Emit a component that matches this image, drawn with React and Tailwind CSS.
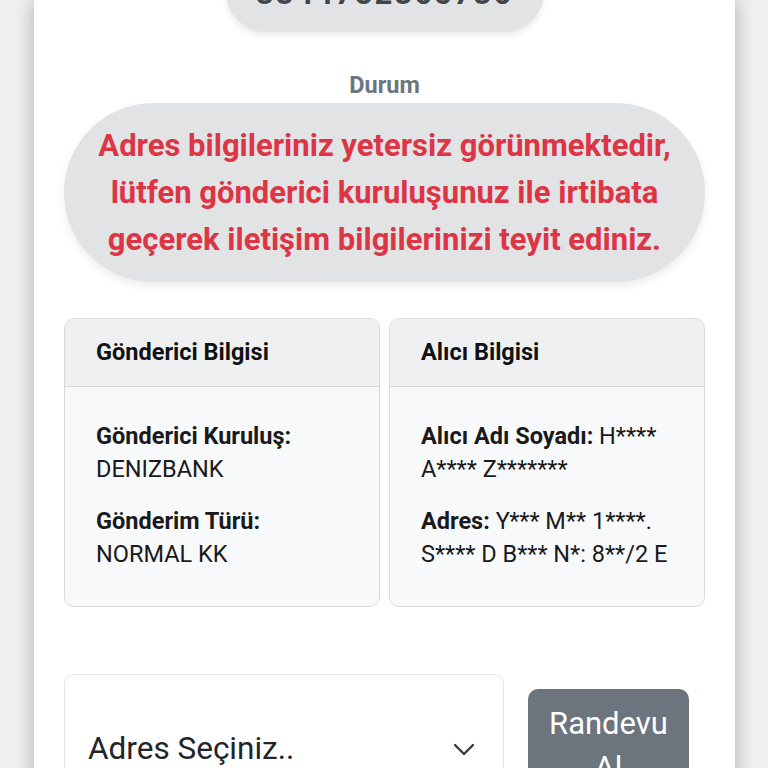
const InfoCard = ({ title, children }) => (
  <div className="flex-1 overflow-hidden rounded-[10px] border border-[#d9dadb] bg-[#f8f9fa]">
    <div className="flex h-[68px] items-center border-b border-[#d6d7d8] bg-[#eff0f1] px-[31px] text-[23.5px] font-bold text-[#111]">
      {title}
    </div>
    <div className="flex h-[219px] flex-col gap-[19px] px-[31px] pt-[33px] text-[23.5px] leading-[33px] text-[#1a1a1a]">
      {children}
    </div>
  </div>
);

export default function App() {
  return (
    <div
      className="h-[768px] w-[768px] overflow-hidden bg-[#efefef]"
      style={{ fontFamily: 'Roboto, "Noto Sans", sans-serif' }}
    >
      <div className="ml-[34px] flex min-h-[900px] w-[701px] flex-col items-center bg-white shadow-[0_0_18px_rgba(0,0,0,0.28)]">
        <div className="mt-[-50px] flex h-[82px] w-[318px] shrink-0 items-end justify-center rounded-[40px] bg-[#e2e3e5] pb-[23px] text-[31px] font-bold leading-none tracking-[2px] text-[#41464b] shadow-[0_4px_6px_rgba(0,0,0,0.08)]">
          3344782365736
        </div>

        <div className="mt-[40px] text-[23.5px] font-bold leading-[26px] text-[#6c757d]">Durum</div>

        <div className="mt-[5px] flex h-[179px] w-[641px] shrink-0 items-center justify-center rounded-full bg-[#e2e3e5] px-[10px] text-center text-[31px] font-bold leading-[47px] text-[#dc3545] shadow-[0_4px_8px_rgba(0,0,0,0.08)]">
          <p className="whitespace-nowrap">
            Adres bilgileriniz yetersiz görünmektedir,
            <br />
            lütfen gönderici kuruluşunuz ile irtibata
            <br />
            geçerek iletişim bilgilerinizi teyit ediniz.
          </p>
        </div>

        <div className="mt-[36px] flex w-[641px] shrink-0 gap-[9px]">
          <InfoCard title="Gönderici Bilgisi">
            <div>
              <div className="font-bold">Gönderici Kuruluş:</div>
              <div>DENIZBANK</div>
            </div>
            <div>
              <div className="font-bold">Gönderim Türü:</div>
              <div>NORMAL KK</div>
            </div>
          </InfoCard>
          <InfoCard title="Alıcı Bilgisi">
            <div>
              <span className="font-bold">Alıcı Adı Soyadı:</span> H****
              <br />
              A**** Z*******
            </div>
            <div>
              <span className="font-bold">Adres:</span> Y*** M** 1****.
              <br />
              S**** D B*** N*: 8**/2 E
            </div>
          </InfoCard>
        </div>

        <div className="mt-[67px] flex w-[641px] shrink-0 items-start">
          <div className="flex h-[150px] w-[440px] items-center justify-between rounded-[10px] border border-[#e3e4e5] bg-white pl-[23px] pr-[28px]">
            <span className="text-[31.5px] text-[#212529]">Adres Seçiniz..</span>
            <svg width="22" height="14" viewBox="0 0 22 14" fill="none" stroke="#343a40" strokeWidth="2.4" strokeLinecap="round" strokeLinejoin="round">
              <path d="M2 3l9 9 9-9" />
            </svg>
          </div>
          <button className="ml-[24px] mt-[15px] h-[140px] w-[161px] rounded-[10px] bg-[#6c757d] px-[10px] pt-[13px] text-center text-[31px] leading-[44px] text-white">
            <div className="flex h-full flex-col items-center justify-start">
              <span>Randevu</span>
              <span>Al</span>
            </div>
          </button>
        </div>
      </div>
    </div>
  );
}
